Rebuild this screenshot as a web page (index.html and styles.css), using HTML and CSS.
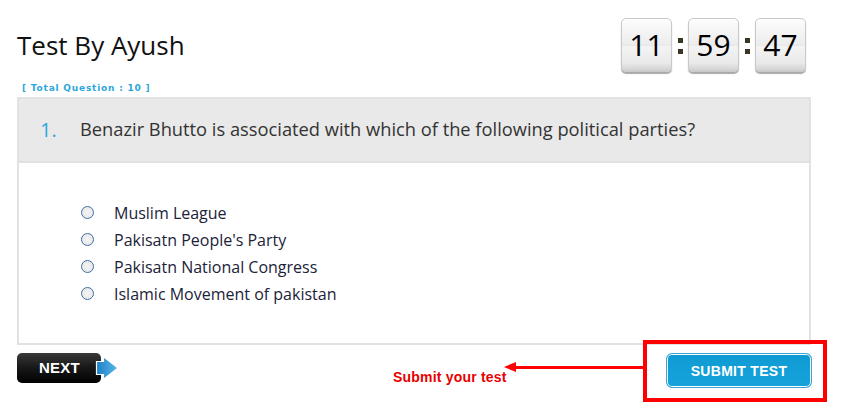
FILE: index.html
```html
<!DOCTYPE html>
<html>
<head>
<meta charset="utf-8">
<link rel="stylesheet" href="styles.css">
</head>
<body>
<div class="page">
  <div class="top">
    <h1 class="title">Test By Ayush</h1>
    <div class="timer">
      <div class="digit">11</div>
      <div class="colon"><i></i><i></i></div>
      <div class="digit">59</div>
      <div class="colon"><i></i><i></i></div>
      <div class="digit">47</div>
    </div>
  </div>
  <div class="total">[ Total Question : 10 ]</div>
  <div class="panel">
    <div class="qhead">
      <span class="qnum">1.</span>
      <span class="qtext">Benazir Bhutto is associated with which of the following political parties?</span>
    </div>
    <ul class="options">
      <li><span class="radio"></span>Muslim League</li>
      <li><span class="radio"></span>Pakisatn People's Party</li>
      <li><span class="radio"></span>Pakisatn National Congress</li>
      <li><span class="radio"></span>Islamic Movement of pakistan</li>
    </ul>
  </div>
  <div class="footer">
    <div class="next">
      <span class="next-btn">NEXT</span>
      <svg class="next-arrow" width="24" height="24" viewBox="0 0 24 24"><defs><linearGradient id="ag" x1="0" y1="0" x2="1" y2="0"><stop offset="0" stop-color="#1e7fc4"/><stop offset="1" stop-color="#5bb8ea"/></linearGradient></defs><path d="M1.5 5.5 H8.5 V0.8 L23 12 L8.5 23.2 V18.5 H1.5 Z" fill="url(#ag)" stroke="#fff" stroke-width="1.2"/></svg>
    </div>
    <button class="submit">SUBMIT TEST</button>
    <div class="note">Submit your test</div>
    <div class="red-line"></div>
    <div class="red-box"></div>
  </div>
</div>
</body>
</html>
```
FILE: styles.css
```css
* { box-sizing: border-box; }
body {
  margin: 0;
  background: #fff;
  font-family: "Open Sans", "DejaVu Sans", sans-serif;
}
.page {
  width: 841px;
  padding: 0 30px 0 17px;
}
.top {
  display: flex;
  justify-content: space-between;
  align-items: flex-start;
  height: 80px;
}
.title {
  margin: 28px 0 0 0;
  font-weight: 400;
  font-size: 26px;
  line-height: 35px;
  color: #111;
}
.timer {
  display: flex;
  align-items: flex-start;
  margin: 18px 5px 0 0;
}
.digit {
  width: 51px;
  height: 54px;
  border: 1px solid #c9c9c9;
  border-radius: 5px;
  background: linear-gradient(#fdfdfd 0%, #ececec 49%, #dedede 50%, #f4f4f4 52%, #e9e9e9 85%, #cfcfcf 100%);
  box-shadow: 0 2px 1px #a9a9a9;
  font-size: 30px;
  line-height: 52px;
  text-align: center;
  color: #000;
}
.colon {
  width: 16px;
  display: flex;
  flex-direction: column;
  align-items: center;
  padding-top: 20px;
  gap: 6px;
}
.colon i {
  display: block;
  width: 5px;
  height: 5px;
  background: #3b3526;
}
.total {
  height: 17px;
  padding-left: 5px;
  padding-top: 1px;
  font-family: "DejaVu Sans", Verdana, sans-serif;
  font-size: 9px;
  font-weight: 700;
  color: #2ea6dc;
  line-height: 14px;
  letter-spacing: 0.8px;
}
.panel {
  border: 2px solid #e2e2e2;
  height: 248px;
}
.qhead {
  background: #e9e9e9;
  height: 64px;
  border-bottom: 2px solid #e0e0e0;
  display: flex;
  align-items: center;
  padding-left: 21px;
  padding-bottom: 3px;
}
.qnum {
  color: #2ea6dc;
  font-size: 20px;
  width: 40px;
  margin-top: 1px;
}
.qtext {
  font-size: 18.3px;
  color: #333;
}
.options {
  list-style: none;
  margin: 0;
  padding: 36px 0 0 62px;
}
.options li {
  display: flex;
  align-items: center;
  height: 27px;
  font-size: 16px;
  color: #1c2238;
}
.radio {
  width: 13px;
  height: 13px;
  border-radius: 50%;
  border: 1px solid #3d6fa8;
  background: radial-gradient(circle, #f4f4f4 0, #e4e4e4 100%);
  margin-right: 20px;
}
.footer {
  position: relative;
  height: 69px;
  display: flex;
  justify-content: space-between;
  align-items: flex-start;
}
.next {
  display: flex;
  align-items: center;
  margin-top: 8px;
}
.next-btn {
  display: block;
  width: 84px;
  height: 30px;
  border-radius: 5px;
  background: linear-gradient(#3a3a3a 0%, #1a1a1a 45%, #000 100%);
  color: #fff;
  font-family: "Liberation Sans", Arial, sans-serif;
  font-weight: 700;
  font-size: 15px;
  line-height: 30px;
  padding-left: 22px;
  letter-spacing: 0.2px;
}
.next-arrow {
  margin-left: -6px;
}
.submit {
  margin-top: 8px;
  margin-right: -1px;
  width: 146px;
  height: 35px;
  border: 1px solid #3aa6d6;
  border-radius: 6px;
  box-shadow: inset 0 0 0 1px #fff;
  background: linear-gradient(#0f9ad2, #16a3db);
  color: #fff;
  font-family: "Liberation Sans", Arial, sans-serif;
  font-weight: 700;
  font-size: 14px;
  letter-spacing: 0.3px;
  padding: 1px 0 0 0;
}
.note {
  position: absolute;
  left: 376px;
  top: 24px;
  color: #e80000;
  font-family: "Liberation Sans", Arial, sans-serif;
  font-weight: 700;
  font-size: 14px;
  letter-spacing: 0.2px;
}
.red-line {
  position: absolute;
  left: 497px;
  top: 21px;
  width: 130px;
  height: 3px;
  background: #f00;
}
.red-line::before {
  content: "";
  position: absolute;
  left: -10px;
  top: -4px;
  border-right: 12px solid #f00;
  border-top: 5.5px solid transparent;
  border-bottom: 5.5px solid transparent;
}
.red-box {
  position: absolute;
  left: 626px;
  top: -5px;
  width: 184px;
  height: 62px;
  border: 4px solid #f00;
}
```
